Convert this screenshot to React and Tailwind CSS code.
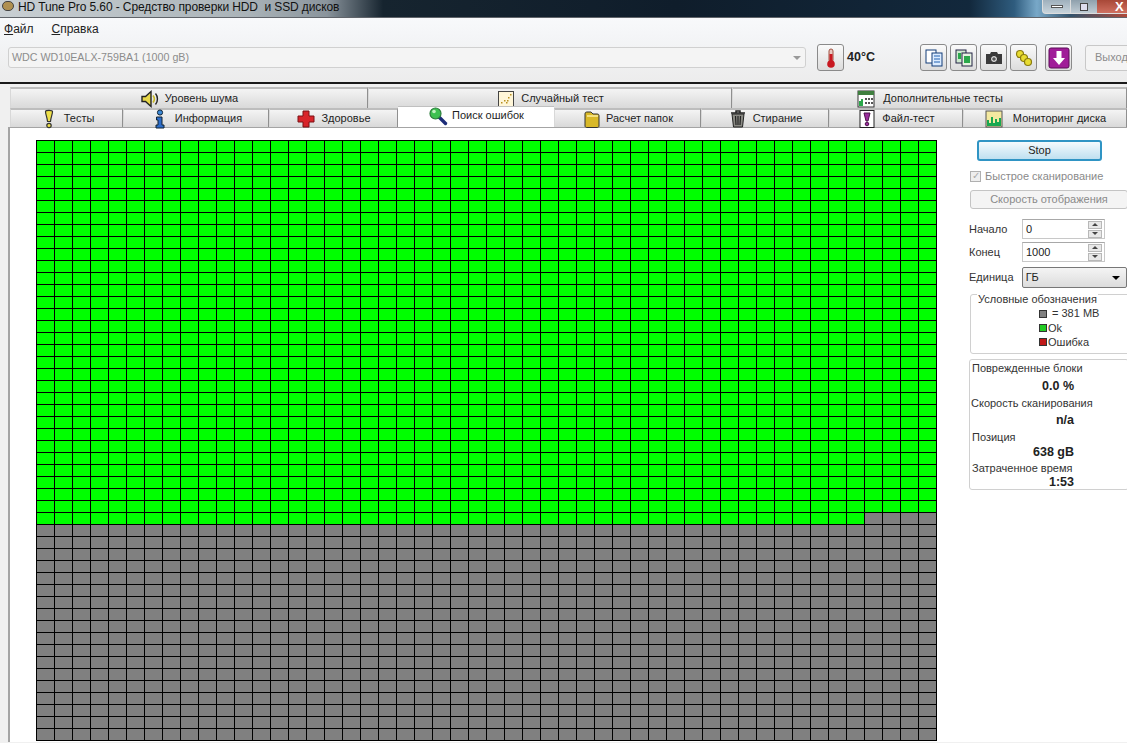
import React from "react";

const ROWS = 50, COLS = 50, FULL_ROWS = 31, PARTIAL = 46;
const cells = Array.from({ length: ROWS * COLS }, (_, i) => {
  const r = Math.floor(i / COLS), c = i % COLS;
  return r < FULL_ROWS || (r === FULL_ROWS && c < PARTIAL);
});

const Svg = ({ children, s = 20, className = "" }) => (
  <svg width={s} height={s} viewBox="0 0 20 20" className={"shrink-0 " + className}>{children}</svg>
);

const Speaker = () => (<Svg><path d="M2 7.500h3.500L11 2.500v15l-5.500-5H2z" fill="#e8d84a" stroke="#222" strokeWidth="1.400"/><path d="M13 6.500c1.600 2 1.600 5 0 7" fill="none" stroke="#c8b820" strokeWidth="1.600"/><path d="M15.500 4.500c2.600 3 2.600 8 0 11" fill="none" stroke="#222" strokeWidth="1.400"/></Svg>);
const Dots = () => (<Svg><rect x="2.500" y="2.500" width="15" height="15" fill="#fff6d8" stroke="#444"/><g fill="#b89020"><rect x="5" y="13" width="1.500" height="1.500"/><rect x="8" y="11" width="1.500" height="1.500"/><rect x="10" y="13" width="1.500" height="1.500"/><rect x="12" y="8" width="1.500" height="1.500"/><rect x="14" y="5" width="1.500" height="1.500"/><rect x="11" y="11" width="1.500" height="1.500"/></g></Svg>);
const Calc = () => (<Svg><rect x="2" y="2" width="16" height="16" fill="#fff" stroke="#333"/><rect x="2" y="2" width="16" height="4" fill="#3f7f3f"/><path d="M3 17v-5h2v-2h2v7z" fill="#2aa84a"/><g fill="#555"><rect x="9" y="9" width="2" height="2"/><rect x="12" y="9" width="2" height="2"/><rect x="15" y="9" width="2" height="2"/><rect x="9" y="13" width="2" height="2"/><rect x="12" y="13" width="2" height="2"/><rect x="15" y="13" width="2" height="2"/></g></Svg>);
const Bulb = () => (<Svg><path d="M6.500 2.500c0-1.500 7-1.500 7 0 0 3-1.500 5-2 10h-3c-.5-5-2-7-2-10z" fill="#eee04a" stroke="#333" strokeWidth="1.200" strokeLinejoin="round"/><circle cx="10" cy="16.500" r="2.200" fill="#eee04a" stroke="#333" strokeWidth="1.200"/></Svg>);
const Info = () => (<Svg><circle cx="10" cy="3.500" r="2.600" fill="#3c8ad8" stroke="#123"/><path d="M6.500 8H12v8h2v3H6v-3h2v-5H6.500z" fill="#2c6cc8" stroke="#123"/></Svg>);
const Plus = () => (<Svg><path d="M7 2h6v5h5v6h-5v5H7v-5H2V7h5z" fill="#d8242a" stroke="#7a1015"/></Svg>);
const Lens = () => (<Svg><path d="M11 11l6.500 6.500" stroke="#1c2c78" strokeWidth="3.400" strokeLinecap="round"/><circle cx="7.500" cy="7.500" r="5.500" fill="#3cc050" stroke="#2c7c3c" strokeWidth="1.200"/><circle cx="6" cy="5.500" r="1.800" fill="#bff0c0"/></Svg>);
const Folder = () => (<Svg><path d="M3 5c0-2 1-2 3-2h3l2 2h4c2 0 2 1 2 2v10c0 1-1 1.500-2 1.500H5c-1 0-2-.5-2-1.500z" fill="#d8b828" stroke="#333"/><rect x="5" y="6" width="11" height="2" fill="#f4e080"/></Svg>);
const Trash = () => (<Svg><path d="M3 4h14M8 4V2h4v2" stroke="#222" strokeWidth="1.500" fill="none"/><path d="M4 5h12l-1.500 13h-9z" fill="#8a8a84" stroke="#222"/><path d="M7.500 7l.5 9M10 7v9M12.500 7l-.5 9" stroke="#222" strokeWidth="1.200"/></Svg>);
const FileBulb = () => (<Svg><rect x="3" y="1.500" width="14" height="17" fill="#fff" stroke="#222"/><path d="M7 4h6l-2 8H9z" fill="#9a2c9c" stroke="#4c104c"/><circle cx="10" cy="15" r="1.800" fill="#9a2c9c" stroke="#4c104c"/></Svg>);
const Chart = () => (<Svg><rect x="2" y="2" width="16" height="16" fill="#f4e9a0" stroke="#555"/><path d="M3 17v-6h2v3h2V8h2v6h2v-4h2v3h2V9h2v8z" fill="#18a850"/></Svg>);

const Tab = ({ w, icon, label, top, gap = "gap-[5px]" }) => (
  <div className={`flex items-center justify-center ${gap} border-t-2 border-l border-r border-t-[#bdbdbd] border-l-[#d8d8d8] border-r-[#8f8f8f] bg-[linear-gradient(#f4f4f4,#d9d9d9)] ${top ? "h-[21px]" : "h-[19px]"} ${w}`}>
    {icon}<span>{label}</span>
  </div>
);

const ToolBtn = ({ children, className = "" }) => (
  <div className={`w-[27px] h-[27px] rounded-[3px] border border-[#8a8a8a] bg-[linear-gradient(#fafafa,#dcdcdc)] flex items-center justify-center shrink-0 ${className}`}>{children}</div>
);

const Spin = ({ v }) => (
  <div className="w-[83px] h-[20px] border border-[#c8c8c8] border-t-[#a8a8a8] bg-white flex items-center pl-[3px] pr-[2px] text-[#222]">
    <span className="grow">{v}</span>
    <div className="w-[14px] h-[17px] flex flex-col gap-px">
      <div className="h-2 border border-[#b8b8b8] bg-[#e8e8e8] flex items-center justify-center"><div className="w-0 h-0 border-x-[3px] border-x-transparent border-b-[3px] border-b-[#444]" /></div>
      <div className="h-2 border border-[#b8b8b8] bg-[#e8e8e8] flex items-center justify-center"><div className="w-0 h-0 border-x-[3px] border-x-transparent border-t-[3px] border-t-[#444]" /></div>
    </div>
  </div>
);

export default function App() {
  return (
    <div className="w-[1127px] h-[743px] overflow-hidden bg-[#f0f0f0] text-[11px] leading-none text-[#1e1e1e] font-['Liberation_Sans','Noto_Sans',sans-serif]">
      {/* title bar */}
      <div className="relative h-[17px] bg-[linear-gradient(90deg,#c9cfd3_0%,#aab3b8_22%,#8a949c_29%,#16242f_34%,#0f1d2b_60%,#12283c_86%,#2f5c7e_90%,#78a8c8_92%,#33536c_95%,#b04a3a_100%)] flex items-end pl-[18px] overflow-hidden">
        <div className="absolute left-[2px] top-[1px] w-[12px] h-[10px] rounded-full bg-[#b09050] border border-[#444]" />
        <span className="text-[12px] text-[#111] tracking-[-0.1px] pb-[4px]">HD Tune Pro 5.60 - Средство проверки HDD&nbsp; и SSD дисков</span>
        <div className="absolute right-0 top-0 flex h-[15px] items-start">
          <div className="w-[29px] h-[14px] rounded-bl-[4px] border border-[#ddd] border-t-0 bg-[linear-gradient(#9fb0bc,#c8d4dc)] flex items-center justify-center"><div className="w-[12px] h-[3px] bg-white border border-[#555]" /></div>
          <div className="w-[26px] h-[14px] border-b border-[#ddd] bg-[linear-gradient(#8fa0ac,#c0ccd4)] flex items-center justify-center"><div className="w-[8px] h-[8px] border border-[#444] bg-[#dde]" /></div>
          <div className="w-[30px] h-[14px] border-b border-[#ddd] bg-[linear-gradient(#a84838,#d07060)] text-white font-bold text-[13px] pl-[18px]">X</div>
        </div>
      </div>
      {/* menu + toolbar */}
      <div className="h-[67px] border-b-2 border-[#1a1a1a] bg-[linear-gradient(#f8f9fb_0%,#f4f5f7_30%,#ececec_100%)] border-t border-t-[#60646a]">
        <div className="flex gap-[18px] pl-[4px] pt-[5px] text-[12px] text-[#222]">
          <span><u>Ф</u>айл</span><span><u>С</u>правка</span>
        </div>
        <div className="flex items-center mt-[9px] pl-[8px] h-[27px]">
          <div className="w-[798px] h-[21px] shrink-0 border border-[#d0d0d0] rounded-[3px] bg-[#f4f4f4] flex items-center pl-[3px] text-[#8c8c8c] text-[10.700px]">
            <span className="grow">WDC WD10EALX-759BA1 (1000 gB)</span>
            <div className="w-0 h-0 mr-[4px] border-x-[4px] border-x-transparent border-t-[4px] border-t-[#999]" />
          </div>
          <ToolBtn className="ml-[11px]">
            <svg width="14" height="22" viewBox="0 0 14 22"><rect x="5" y="2" width="4" height="13" rx="2" fill="#e8c8c0" stroke="#a05040"/><rect x="5.500" y="7" width="3" height="9" fill="#c81820"/><circle cx="7" cy="17" r="3.800" fill="#c81820"/></svg>
          </ToolBtn>
          <span className="ml-[3px] font-bold text-[12.500px] text-[#222] w-[73px] shrink-0">40°C</span>
          <ToolBtn>
            <svg width="20" height="20" viewBox="0 0 20 20"><rect x="2" y="2" width="10" height="13" fill="#fff" stroke="#123c78"/><rect x="8" y="5" width="10" height="13" fill="#dcecff" stroke="#123c78"/><path d="M10 8h6M10 11h6M10 14h6" stroke="#2060b0"/></svg>
          </ToolBtn>
          <ToolBtn className="ml-[3px]">
            <svg width="20" height="20" viewBox="0 0 20 20"><rect x="2" y="2" width="10" height="13" fill="#cfe8cf" stroke="#224"/><rect x="8" y="5" width="10" height="13" fill="#e6f2e0" stroke="#224"/><rect x="10" y="8" width="6" height="7" fill="#2aa84a"/><rect x="4" y="5" width="3" height="6" fill="#2aa84a"/></svg>
          </ToolBtn>
          <ToolBtn className="ml-[3px]">
            <svg width="20" height="20" viewBox="0 0 20 20"><path d="M2 6h4l1-2h6l1 2h4v10H2z" fill="#3a3a3a"/><circle cx="10" cy="11" r="3.500" fill="#e8e8e8" stroke="#222"/><circle cx="10" cy="11" r="1.800" fill="#555"/></svg>
          </ToolBtn>
          <ToolBtn className="ml-[3px]">
            <svg width="20" height="20" viewBox="0 0 20 20"><g fill="none" stroke="#8a7c10" strokeWidth="1.200"><circle cx="6" cy="6" r="3.500" fill="#e8dc30"/><circle cx="10" cy="10" r="3.500" fill="#e8dc30"/><circle cx="14" cy="14" r="3.500" fill="#e8dc30"/></g></svg>
          </ToolBtn>
          <ToolBtn className="ml-[8px]">
            <svg width="22" height="22" viewBox="0 0 22 22"><rect x="1" y="1" width="20" height="20" rx="2" fill="#a01c98" stroke="#5c0c58"/><path d="M8.500 4h5v7h3.500L11 18 5 11h3.500z" fill="#fff"/></svg>
          </ToolBtn>
          <div className="ml-[13px] w-[60px] h-[26px] border border-[#c8c8c8] rounded-[3px] bg-[#f4f4f4] text-[#8c8c8c] flex items-center pl-[9px] shrink-0">Выход</div>
        </div>
      </div>
      {/* tabs */}
      <div className="pt-[3px] pl-[10px]">
        <div className="flex">
          <Tab top w="w-[358px]" icon={<Speaker />} label="Уровень шума" />
          <Tab top w="w-[364px]" icon={<Dots />} label="Случайный тест" />
          <Tab top w="w-[395px]" gap="gap-[7px]" icon={<Calc />} label="Дополнительные тесты" />
        </div>
        <div className="flex">
          <Tab w="w-[113px]" icon={<Bulb />} label="Тесты" />
          <Tab w="w-[146px]" icon={<Info />} label="Информация" />
          <Tab w="w-[129px]" icon={<Plus />} label="Здоровье" />
          <div className="w-[156px] h-[21px] -mt-[2px] bg-white border-t border-[#c0c0c0] flex items-center justify-center gap-[4px] pb-[3px] z-10 relative"><Lens /><span>Поиск ошибок</span></div>
          <Tab w="w-[147px]" gap="gap-[4px]" icon={<Folder />} label="Расчет папок" />
          <Tab w="w-[128px]" icon={<Trash />} label="Стирание" />
          <Tab w="w-[134px]" icon={<FileBulb />} label="Файл-тест" />
          <Tab w="w-[164px]" gap="gap-[9px]" icon={<Chart />} label="Мониторинг диска" />
        </div>
      </div>
      {/* content */}
      <div className="ml-[8px] h-[615px] bg-white border-l-2 border-t border-[#a4a4a4] flex pl-[26px] pt-[12px]">
        <div className="grid grid-cols-[repeat(50,18px)] grid-rows-[repeat(50,12px)] w-[901px] h-[601px] border-t border-l border-black shrink-0">
          {cells.map((ok, i) => (
            <div key={i} className={`border-r border-b border-black ${ok ? "bg-[#00ff00]" : "bg-[#808080]"}`} />
          ))}
        </div>
        <div className="ml-[32px] w-[158px] shrink-0 text-[#333]">
          <div className="ml-[8px] w-[125px] h-[21px] rounded-[3px] border-2 border-[#2f94c4] bg-[linear-gradient(#f4fafd,#bfe0f0)] flex items-center justify-center text-[#222]">Stop</div>
          <div className="flex items-center mt-[9px] ml-[1px] h-[12px] text-[#8a8a8a]">
            <div className="w-[11px] h-[11px] border border-[#b0b0b0] bg-[#eee] text-[#aaa] text-[10px] flex items-center justify-center">✓</div>
            <span className="ml-[4px]">Быстрое сканирование</span>
          </div>
          <div className="mt-[8px] ml-[1px] w-[158px] h-[19px] border border-[#c4c4c4] rounded-[3px] bg-[#f4f4f4] text-[#8a8a8a] flex items-center justify-center">Скорость отображения</div>
          <div className="flex items-center mt-[10px]"><span className="w-[53px]">Начало</span><Spin v="0" /></div>
          <div className="flex items-center mt-[3px]"><span className="w-[53px]">Конец</span><Spin v="1000" /></div>
          <div className="flex items-center mt-[5px]">
            <span className="w-[53px]">Единица</span>
            <div className="w-[106px] h-[21px] border border-[#777] rounded-[2px] bg-[linear-gradient(#f4f4f4,#dcdcdc)] flex items-center pl-[3px] pr-[6px] text-[#222]">
              <span className="grow">ГБ</span>
              <div className="w-0 h-0 border-x-[4px] border-x-transparent border-t-[4px] border-t-black" />
            </div>
          </div>
          <div className="relative mt-[6px] ml-[1px] w-[160px] h-[60px] border border-[#d0d0d0] rounded-[3px] pt-[11px] pl-[68px]">
            <span className="absolute left-[6px] -top-[1px] bg-white px-[1px]">Условные обозначения</span>
            <div className="flex items-center h-[15px] gap-[5px]"><div className="w-[8px] h-[8px] bg-[#808080] border border-[#333]" />= 381 MB</div>
            <div className="flex items-center h-[14px] gap-px"><div className="w-[8px] h-[8px] bg-[#22cc22] border border-[#333]" />Ok</div>
            <div className="flex items-center h-[14px] gap-px"><div className="w-[8px] h-[8px] bg-[#c01818] border border-[#333]" />Ошибка</div>
          </div>
          <div className="mt-[5px] w-[160px] h-[131px] border border-[#d0d0d0] rounded-[3px] pl-[2px] pt-[2px]">
            <div className="h-[13px] flex items-center">Поврежденные блоки</div>
            <div className="h-[22px] flex items-center justify-end pr-[54px] font-bold text-[12.500px] text-[#222]">0.0 %</div>
            <div className="h-[13px] flex items-center -ml-px">Скорость сканирования</div>
            <div className="h-[21px] flex items-center justify-end pr-[54px] font-bold text-[12.500px] text-[#222]">n/a</div>
            <div className="h-[13px] flex items-center">Позиция</div>
            <div className="h-[17px] flex items-center justify-end pr-[54px] font-bold text-[12.500px] text-[#222]">638 gB</div>
            <div className="h-[12px] flex items-center mt-px">Затраченное время</div>
            <div className="h-[16px] flex items-center justify-end pr-[54px] font-bold text-[12.500px] text-[#222]">1:53</div>
          </div>
        </div>
      </div>
    </div>
  );
}
